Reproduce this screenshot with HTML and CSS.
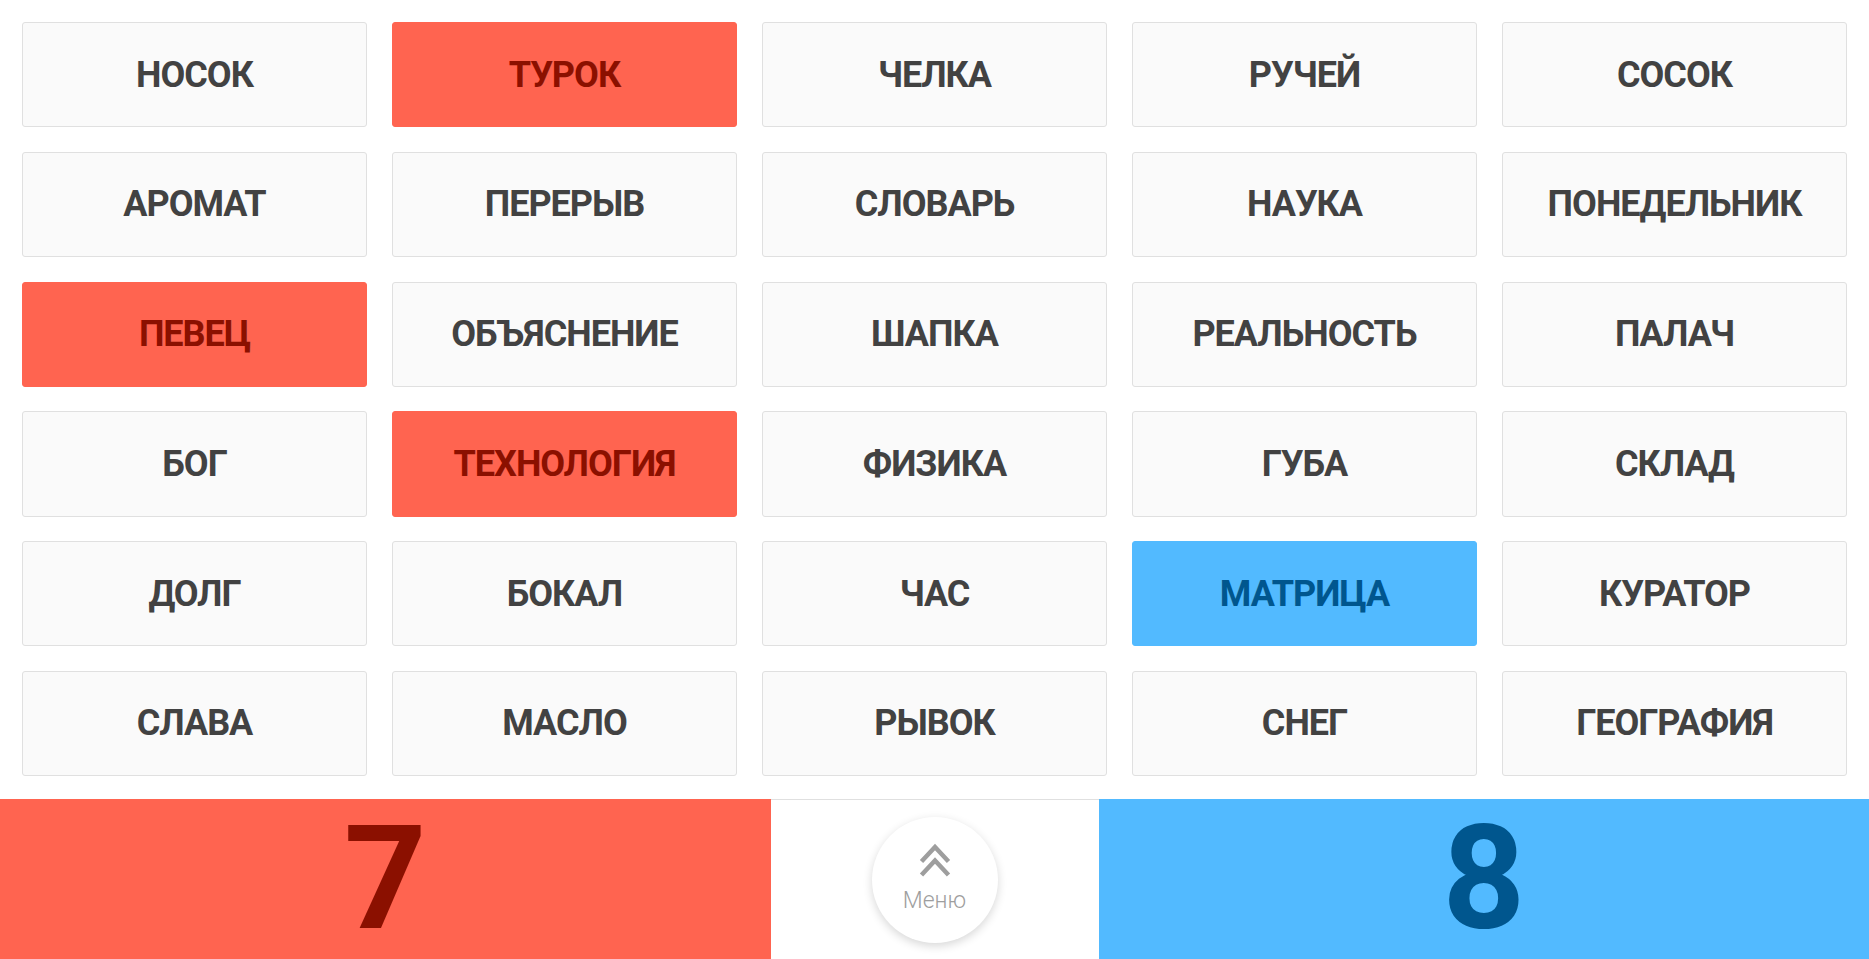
FILE: index.html
```html
<!DOCTYPE html>
<html lang="ru">
<head>
    <meta charset="UTF-8">
    <meta name="viewport" content="width=device-width, initial-scale=1.0">
    <title>Слова</title>
    <link rel="stylesheet" href="styles.css">
</head>
<body>

    <div class="board">
        <div class="word">Носок</div>
        <div class="word red">Турок</div>
        <div class="word">Челка</div>
        <div class="word">Ручей</div>
        <div class="word">Сосок</div>

        <div class="word">Аромат</div>
        <div class="word">Перерыв</div>
        <div class="word">Словарь</div>
        <div class="word">Наука</div>
        <div class="word">Понедельник</div>

        <div class="word red">Певец</div>
        <div class="word">Объяснение</div>
        <div class="word">Шапка</div>
        <div class="word">Реальность</div>
        <div class="word">Палач</div>

        <div class="word">Бог</div>
        <div class="word red">Технология</div>
        <div class="word">Физика</div>
        <div class="word">Губа</div>
        <div class="word">Склад</div>

        <div class="word">Долг</div>
        <div class="word">Бокал</div>
        <div class="word">Час</div>
        <div class="word blue">Матрица</div>
        <div class="word">Куратор</div>

        <div class="word">Слава</div>
        <div class="word">Масло</div>
        <div class="word">Рывок</div>
        <div class="word">Снег</div>
        <div class="word">География</div>
    </div>

    <div class="score-bar">
        <div class="score score-red">7</div>
        <div class="menu-cell">
            <div class="menu-button">
                <svg class="menu-icon" viewBox="0 0 32 34" width="32" height="34">
                    <polyline points="2.5,18.5 16,4 29.5,18.5"/>
                    <polyline points="2.5,32 16,17.5 29.5,32"/>
                </svg>
                <span class="menu-label">Меню</span>
            </div>
        </div>
        <div class="score score-blue">8</div>
    </div>

</body>
</html>
```

FILE: styles.css
```css
* {
    box-sizing: border-box;
    font-family: Roboto, 'Liberation Sans', sans-serif;
}

body {
    margin: 0;
    height: 100vh;
    display: flex;
    flex-direction: column;
    background-color: #ffffff;
    overflow: hidden;
}

.board {
    flex: 1;
    display: grid;
    grid-template-columns: repeat(5, 1fr);
    grid-template-rows: repeat(6, 1fr);
    gap: 24.5px 25px;
    padding: 22px 22px 23px;
}

.word {
    display: flex;
    align-items: center;
    justify-content: center;
    background-color: #fafafa;
    border: 1px solid #e0e0e0;
    border-radius: 3px;
    color: #424242;
    font-size: 36px;
    font-weight: 700;
    letter-spacing: -1px;
    text-transform: uppercase;
}

.word.red {
    background-color: #ff6450;
    border-color: #ff6450;
    color: #8b1000;
}

.word.blue {
    background-color: #52baff;
    border-color: #52baff;
    color: #00568e;
}

.score-bar {
    height: 160px;
    display: flex;
}

.score {
    flex: 1;
    display: flex;
    align-items: center;
    justify-content: center;
    font-size: 144px;
    font-weight: 700;
    line-height: 160px;
}

.score-red {
    background-color: #ff6450;
    color: #8b1000;
}

.score-blue {
    background-color: #52baff;
    color: #00568e;
}

.menu-cell {
    width: 328px;
    border-top: 1px solid #e0e0e0;
    display: flex;
    align-items: center;
    justify-content: center;
}

.menu-button {
    width: 126px;
    height: 126px;
    border-radius: 50%;
    background-color: #ffffff;
    box-shadow: 0 3px 10px rgba(0, 0, 0, 0.16);
    display: flex;
    flex-direction: column;
    align-items: center;
    padding-top: 26px;
    gap: 10px;
}

.menu-icon {
    display: block;
    flex-shrink: 0;
    fill: none;
    stroke: #9e9e9e;
    stroke-width: 4.5;
}

.menu-label {
    color: #9e9e9e;
    font-size: 23px;
    font-weight: 300;
}
```
